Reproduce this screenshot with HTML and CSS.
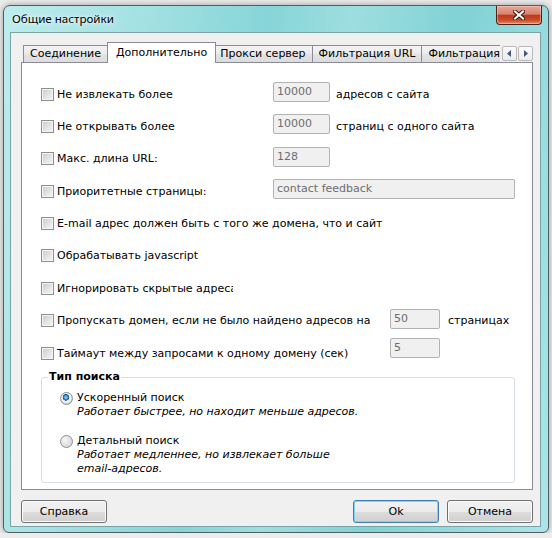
FILE: index.html
```html
<!DOCTYPE html>
<html lang="ru">
<head>
    <meta charset="UTF-8">
    <title>Общие настройки</title>
    <link rel="stylesheet" href="styles.css">
</head>
<body>
    <div class="window">
        <div class="titlebar">
            <span class="title">Общие настройки</span>
            <span class="close">
                <svg width="12" height="10" viewBox="0 0 12 10">
                    <path d="M2 1.5 L10 8.5 M10 1.5 L2 8.5" stroke="#3a1a12" stroke-width="4" stroke-linecap="square"/>
                    <path d="M2 1.5 L10 8.5 M10 1.5 L2 8.5" stroke="#fff" stroke-width="2" stroke-linecap="square"/>
                </svg>
            </span>
        </div>
        <div class="client">
            <div class="tabstrip">
                <div class="tabs">
                    <span class="tab">Соединение</span>
                    <span class="tab active">Дополнительно</span>
                    <span class="tab">Прокси сервер</span>
                    <span class="tab">Фильтрация URL</span>
                    <span class="tab">Фильтрация</span>
                </div>
                <div class="scroll">
                    <span class="arrow"><svg width="5" height="7" viewBox="0 0 5 7"><path d="M4 0 L0 3.5 L4 7 Z" fill="#43597a"/></svg></span>
                    <span class="arrow"><svg width="5" height="7" viewBox="0 0 5 7"><path d="M1 0 L5 3.5 L1 7 Z" fill="#43597a"/></svg></span>
                </div>
            </div>
            <div class="panel">
                <div class="options">
                    <div class="row">
                        <label class="opt"><span class="check"></span>Не извлекать более</label>
                        <span class="field">10000</span>
                        <span class="suffix">адресов с сайта</span>
                    </div>
                    <div class="row">
                        <label class="opt"><span class="check"></span>Не открывать более</label>
                        <span class="field">10000</span>
                        <span class="suffix">страниц с одного сайта</span>
                    </div>
                    <div class="row">
                        <label class="opt"><span class="check"></span>Макс. длина URL:</label>
                        <span class="field">128</span>
                    </div>
                    <div class="row">
                        <label class="opt"><span class="check"></span>Приоритетные страницы:</label>
                        <span class="field wide">contact feedback</span>
                    </div>
                    <div class="row">
                        <label class="opt"><span class="check"></span>E-mail адрес должен быть с того же домена, что и сайт</label>
                    </div>
                    <div class="row">
                        <label class="opt"><span class="check"></span>Обрабатывать javascript</label>
                    </div>
                    <div class="row">
                        <label class="opt clip"><span class="check"></span>Игнорировать скрытые адреса</label>
                    </div>
                    <div class="row">
                        <label class="opt long"><span class="check"></span>Пропускать домен, если не было найдено адресов на</label>
                        <span class="field small">50</span>
                        <span class="suffix far">страницах</span>
                    </div>
                    <div class="row last">
                        <label class="opt long"><span class="check"></span>Таймаут между запросами к одному домену (сек)</label>
                        <span class="field small">5</span>
                    </div>
                </div>

                <fieldset class="group">
                    <legend>Тип поиска</legend>
                    <div class="choice">
                        <div class="choice-head"><span class="radio on"></span>Ускоренный поиск</div>
                        <div class="desc">Работает быстрее, но находит меньше адресов.</div>
                    </div>
                    <div class="choice">
                        <div class="choice-head"><span class="radio"></span>Детальный поиск</div>
                        <div class="desc">Работает медленнее, но извлекает больше<br>email-адресов.</div>
                    </div>
                </fieldset>
            </div>
            <div class="footer">
                <button class="btn">Справка</button>
                <span class="spacer"></span>
                <button class="btn default">Ok</button>
                <button class="btn">Отмена</button>
            </div>
        </div>
    </div>
</body>
</html>
```

FILE: styles.css
```css
* {
    box-sizing: border-box;
}
body {
    margin: 0;
    background: #ececec;
    font-family: "DejaVu Sans", Verdana, sans-serif;
    font-size: 11px;
    color: #000;
}
.window {
    width: 546px;
    height: 528px;
    margin: 5px 0 0 3px;
    border: 1px solid #4d5f63;
    border-radius: 7px 7px 6px 6px;
    padding: 0 7px 5px 6px;
    display: flex;
    flex-direction: column;
    background: linear-gradient(100deg, #bdeced 0%, #a4e1e3 22%, #86d5d8 42%, #9edee0 55%, #80d2d5 72%, #ace5e7 100%);
    box-shadow: 0 0 6px rgba(0, 0, 0, .35);
}
.titlebar {
    height: 26px;
    display: flex;
    justify-content: space-between;
    align-items: flex-start;
}
.title {
    font-family: "Noto Sans", "Open Sans", sans-serif;
    font-size: 11.6px;
    line-height: 26px;
    padding-left: 2px;
    text-shadow: 0 0 6px rgba(255, 255, 255, .9), 0 0 3px rgba(255, 255, 255, .8);
}
.close {
    width: 46px;
    height: 19px;
    margin-right: -1px;
    border: 1px solid #4e2117;
    border-top: none;
    border-radius: 0 0 4px 4px;
    display: flex;
    align-items: center;
    justify-content: center;
    background: linear-gradient(#e9a897 0%, #d8826c 45%, #c0391a 52%, #c94f30 80%, #e0906a 100%);
    box-shadow: inset 0 0 0 1px rgba(255, 220, 210, .45);
}
.client {
    flex: 1;
    border: 1px solid #7aa3a6;
    background: #f0f0f0;
    padding: 9px 7px 3px 10px;
    display: flex;
    flex-direction: column;
}
.tabstrip {
    display: flex;
    height: 21px;
    margin-bottom: -1px;
    position: relative;
    z-index: 1;
}
.tabs {
    width: 479px;
    display: flex;
    align-items: flex-end;
    padding-left: 2px;
    overflow: hidden;
}
.tab {
    height: 17px;
    margin-bottom: 1px;
    margin-right: -1px;
    padding: 0 6px;
    line-height: 16px;
    white-space: nowrap;
    border: 1px solid #898c95;
    border-bottom: none;
    background: linear-gradient(#f3f3f3, #ebebeb 50%, #e3e3e3 51%, #dcdcdc);
}
.tab:first-child {
    padding: 0 8px 0 6px;
}
.tab.active {
    height: 21px;
    margin: 0 -3px 0 -2px;
    padding: 0 8px;
    line-height: 19px;
    background: #fff;
    position: relative;
    z-index: 1;
}
.scroll {
    display: flex;
    gap: 1px;
    margin: 4px 0 0 2px;
}
.arrow {
    width: 15px;
    height: 15px;
    border: 1px solid #b9b9b9;
    border-radius: 2px;
    background: linear-gradient(#fbfbfb, #ececec);
    display: flex;
    align-items: center;
    justify-content: center;
}
.panel {
    height: 428px;
    border: 1px solid #898c95;
    background: #fff;
    padding: 21px 0 0 19px;
}
.options {
    display: flex;
    flex-direction: column;
    gap: 12.4px;
}
.row {
    height: 20px;
    display: flex;
    align-items: center;
}
.opt {
    width: 232px;
    display: flex;
    align-items: center;
    gap: 3px;
    white-space: nowrap;
}
.opt.long {
    width: 349px;
}
.opt.clip {
    width: 192px;
    overflow: hidden;
}
.check {
    flex: none;
    width: 13px;
    height: 13px;
    border: 1px solid #8e8f8f;
    background: linear-gradient(135deg, #cbcbcb, #f7f7f7);
    box-shadow: inset 0 0 0 1px #f4f4f4;
}
.field {
    width: 57px;
    height: 20px;
    margin-bottom: 4px;
    padding: 0 3px;
    line-height: 18px;
    color: #6d6d6d;
    background: #f0f0f0;
    border: 1px solid #b2b2b2;
    border-radius: 2px;
}
.field.wide {
    width: 242px;
}
.field.small {
    width: 50px;
}
.row.last .field {
    margin-bottom: 10px;
}
.suffix {
    margin-left: 6px;
}
.suffix.far {
    margin-left: 8px;
}
.group {
    width: 474px;
    margin: 7px 0 0;
    padding: 7px 0 6px 6px;
    border: 1px solid #d5dfe5;
    border-radius: 3px;
}
.group legend {
    padding: 0 1px;
    font-weight: bold;
    line-height: 14px;
}
.choice {
    margin-left: 12px;
    line-height: 14px;
}
.choice + .choice {
    margin-top: 15px;
}
.choice-head {
    display: flex;
    align-items: center;
    gap: 4px;
}
.radio {
    flex: none;
    width: 13px;
    height: 13px;
    border-radius: 50%;
    border: 1px solid #8e8f8f;
    background: radial-gradient(circle at 35% 35%, #f7f7f7, #cfcfcf);
}
.radio.on {
    background: radial-gradient(circle at 45% 40%, #9fe2ff 0, #2f8fd0 2px, #144f86 3px, #e9e9e9 3.5px, #f7f7f7 5px, #d0d0d0 6px);
}
.desc {
    margin-left: 17px;
    font-style: italic;
}
.footer {
    margin-top: 10px;
    display: flex;
    gap: 8px;
}
.spacer {
    flex: 1;
}
.btn {
    width: 86px;
    height: 23px;
    padding: 0;
    font-family: "DejaVu Sans", Verdana, sans-serif;
    font-size: 11px;
    color: #000;
    border: 1px solid #707070;
    border-radius: 3px;
    background: linear-gradient(#f2f2f2, #ebebeb 50%, #dddddd 51%, #cfcfcf);
    box-shadow: inset 0 0 0 1px #fbfbfb;
}
.btn.default {
    border-color: #3c7fb1;
    box-shadow: inset 0 0 0 1px #7fd3f4;
}
```
